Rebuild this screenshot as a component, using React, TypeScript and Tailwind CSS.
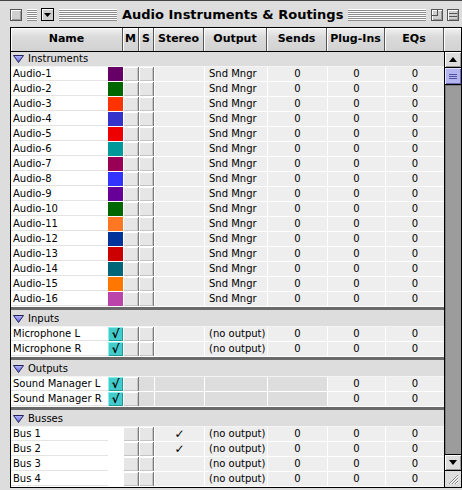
import React from "react";

type Row =
  | { kind: "group"; label: string; sep?: boolean }
  | {
      kind: "track";
      name: string;
      swatch?: string;
      check?: boolean;
      m?: boolean;
      s?: boolean;
      stereo?: boolean;
      output?: string;
      dim?: boolean;
      sends?: string;
    };

const instrumentColors = [
  "#660066",
  "#006600",
  "#ff3300",
  "#3333cc",
  "#ee0000",
  "#009999",
  "#990055",
  "#3333ff",
  "#660099",
  "#006600",
  "#ff7722",
  "#003399",
  "#cc0000",
  "#006677",
  "#ff7700",
  "#bb44aa",
];

const rows: Row[] = [
  { kind: "group", label: "Instruments" },
  ...instrumentColors.map(
    (c, i): Row => ({
      kind: "track",
      name: `Audio-${i + 1}`,
      swatch: c,
      m: true,
      s: true,
      output: "Snd Mngr",
      sends: "0",
    })
  ),
  { kind: "group", label: "Inputs", sep: true },
  { kind: "track", name: "Microphone L", check: true, m: true, s: true, output: "(no output)", sends: "0" },
  { kind: "track", name: "Microphone R", check: true, m: true, s: true, output: "(no output)", sends: "0" },
  { kind: "group", label: "Outputs", sep: true },
  { kind: "track", name: "Sound Manager L", check: true, m: true, dim: true },
  { kind: "track", name: "Sound Manager R", check: true, m: true, dim: true },
  { kind: "group", label: "Busses", sep: true },
  { kind: "track", name: "Bus 1", m: true, s: true, stereo: true, output: "(no output)", sends: "0" },
  { kind: "track", name: "Bus 2", m: true, s: true, stereo: true, output: "(no output)", sends: "0" },
  { kind: "track", name: "Bus 3", m: true, s: true, output: "(no output)", sends: "0" },
  { kind: "track", name: "Bus 4", m: true, s: true, output: "(no output)", sends: "0" },
];

function Disclosure() {
  return (
    <svg width="11" height="8" viewBox="0 0 11 8" className="shrink-0">
      <defs>
        <linearGradient id="tri" x1="0" y1="0" x2="0" y2="1">
          <stop offset="0" stopColor="#b8b8ff" />
          <stop offset="1" stopColor="#5a5ae0" />
        </linearGradient>
      </defs>
      <path d="M0.5 0.5 L10.5 0.5 L5.5 7.5 Z" fill="url(#tri)" stroke="#22225a" strokeWidth="1" />
    </svg>
  );
}

function Stripes({ className }: { className: string }) {
  return (
    <div
      className={`h-[12px] bg-[image:repeating-linear-gradient(to_bottom,#ffffff_0px,#ffffff_1px,#8c8c8c_1px,#8c8c8c_2px)] ${className}`}
    />
  );
}

function BevelBtn() {
  return (
    <div className="w-full h-full bg-[#e6e6e6] border-r border-[#7a7a7a] shadow-[inset_1px_1px_0_#ffffff,inset_-1px_-1px_0_#c4c4c4]" />
  );
}

function CheckBox() {
  return (
    <div className="w-full h-full bg-[#44cccc] flex items-center justify-center shadow-[inset_1px_1px_0_#88eeee,inset_-1px_-1px_0_#229999]">
      <span className="text-[12px] leading-none font-bold text-black" style={{ fontFamily: "'DejaVu Sans', sans-serif" }}>
        √
      </span>
    </div>
  );
}

function GroupRow({ label, sep }: { label: string; sep?: boolean }) {
  return (
    <div
      className={`flex items-center gap-[4px] pl-[2px] bg-[#dddddd] border-b border-[#f4f4f4] ${
        sep ? "h-[20px] border-t-[3px] border-t-[#6a6a6a] pt-[1px]" : "h-[15px]"
      }`}
    >
      <Disclosure />
      <span className="text-[10px] leading-none text-black">{label}</span>
    </div>
  );
}

function TrackRow({ r }: { r: Extract<Row, { kind: "track" }> }) {
  const gray = "bg-[#eeeeee] border-l border-white";
  const dark = "bg-[#dddddd] border-l border-white";
  return (
    <div className="flex h-[15px] border-b border-white text-[10px] leading-none text-black">
      <div className="w-[97px] bg-white flex items-center pl-[2px] shadow-[inset_0_-1px_0_#e4e4e4]">
        {r.name}
      </div>
      <div className="w-[15px]">
        {r.swatch ? (
          <div className="w-full h-full" style={{ backgroundColor: r.swatch }} />
        ) : r.check ? (
          <CheckBox />
        ) : (
          <div className="w-full h-full bg-white" />
        )}
      </div>
      <div className="w-[16px]">{r.m ? <BevelBtn /> : null}</div>
      <div className="w-[15px]">{r.s ? <BevelBtn /> : <div className="w-full h-full bg-[#dddddd]" />}</div>
      <div className={`w-[50px] flex items-center justify-center ${r.dim ? dark : gray}`}>
        {r.stereo ? <span className="text-[12px] leading-none">✓</span> : null}
      </div>
      <div className={`w-[63px] flex items-center pl-[4px] ${r.dim ? dark : gray}`}>{r.output ?? ""}</div>
      <div className={`w-[60px] flex items-center justify-center ${r.dim ? dark : gray}`}>{r.sends ?? ""}</div>
      <div className={`w-[58px] flex items-center justify-center ${gray}`}>0</div>
      <div className={`w-[59px] flex items-center justify-center ${gray}`}>0</div>
    </div>
  );
}

function ScrollArrow({ up }: { up?: boolean }) {
  return (
    <div className="h-[16px] w-[16px] bg-[#dddddd] shadow-[inset_1px_1px_0_#ffffff,inset_-1px_-1px_0_#999999] flex items-center justify-center border-b border-black">
      <svg width="8" height="5" viewBox="0 0 8 5">
        {up ? <path d="M0 5 L8 5 L4 0 Z" fill="#000" /> : <path d="M0 0 L8 0 L4 5 Z" fill="#000" />}
      </svg>
    </div>
  );
}

const headers: { label: string; w: string }[] = [
  { label: "Name", w: "w-[112px]" },
  { label: "M", w: "w-[16px]" },
  { label: "S", w: "w-[15px]" },
  { label: "Stereo", w: "w-[50px]" },
  { label: "Output", w: "w-[63px]" },
  { label: "Sends", w: "w-[60px]" },
  { label: "Plug-Ins", w: "w-[58px]" },
  { label: "EQs", w: "w-[59px]" },
  { label: "", w: "w-[17px]" },
];

export default function App() {
  return (
    <div
      className="w-[462px] h-[490px] bg-[#dddddd] overflow-hidden border-t border-[#444444]"
      style={{ fontFamily: "'DejaVu Sans', 'Liberation Sans', sans-serif" }}
    >
      {/* title bar */}
      <div className="h-[26px] flex items-center pt-[1px]">
        <div className="ml-[10px] w-[12px] h-[12px] border border-[#555555] bg-[#cfcfcf] shadow-[inset_1px_1px_0_#ffffff,inset_-1px_-1px_0_#9a9a9a]" />
        <Stripes className="ml-[5px] w-[10px]" />
        <div className="ml-[4px] w-[13px] h-[13px] border border-black bg-[#cccccc] flex items-center justify-center shadow-[inset_1px_1px_0_#ffffff]">
          <svg width="7" height="4" viewBox="0 0 7 4">
            <path d="M0 0 L7 0 L3.5 4 Z" fill="#000" />
          </svg>
        </div>
        <Stripes className="ml-[5px] w-[58px]" />
        <div
          className="px-[5px] text-[13px] font-bold leading-none text-black whitespace-nowrap"
          style={{ fontFamily: "'DejaVu Sans', sans-serif" }}
        >
          Audio Instruments &amp; Routings
        </div>
        <Stripes className="w-[78px]" />
        <div className="ml-[5px] w-[12px] h-[12px] border border-[#555555] bg-[#cfcfcf] shadow-[inset_1px_1px_0_#ffffff,inset_-1px_-1px_0_#9a9a9a] relative">
          <div className="absolute left-0 top-0 w-[6px] h-[6px] border-r border-b border-[#555555]" />
        </div>
        <div className="ml-[4px] w-[12px] h-[12px] border border-[#555555] bg-[#cfcfcf] shadow-[inset_1px_1px_0_#ffffff,inset_-1px_-1px_0_#9a9a9a] flex flex-col justify-center gap-[2px] px-[1px]">
          <div className="h-px bg-[#555555]" />
          <div className="h-px bg-[#555555]" />
        </div>
      </div>

      {/* table frame */}
      <div className="ml-[10px] w-[452px] h-[461px] border border-black bg-white flex flex-col">
        {/* header */}
        <div className="h-[24px] flex border-b border-black bg-[#d9d9d9]">
          {headers.map((h, i) => (
            <div
              key={i}
              className={`${h.w} h-full flex items-center justify-center text-[11px] font-bold text-black bg-[linear-gradient(#f2f2f2,#dadada_40%,#d2d2d2)] border-r border-[#555555] shadow-[inset_1px_1px_0_#ffffff] last:border-r-0`}
            >
              {h.label}
            </div>
          ))}
        </div>

        {/* body */}
        <div className="flex flex-1 min-h-0">
          <div className="w-[433px] flex flex-col bg-[#eeeeee]">
            {rows.map((r, i) =>
              r.kind === "group" ? <GroupRow key={i} label={r.label} sep={r.sep} /> : <TrackRow key={i} r={r} />
            )}
          </div>
          {/* vertical scroll bar */}
          <div className="w-[17px] border-l border-black flex flex-col bg-[#9c9c9c]">
            <ScrollArrow up />
            <div className="h-[17px] bg-[#b4b4f0] border-b border-black shadow-[inset_1px_1px_0_#e0e0ff,inset_-1px_-1px_0_#6a6ab0] flex flex-col items-center justify-center gap-[1px]">
              <div className="w-[8px] h-px bg-[#5050a0]" />
              <div className="w-[8px] h-px bg-[#5050a0]" />
              <div className="w-[8px] h-px bg-[#5050a0]" />
            </div>
            <div className="flex-1 shadow-[inset_1px_1px_0_#7a7a7a]" />
            <div className="border-t border-black">
              <ScrollArrow />
            </div>
            <div className="h-[16px] bg-[#dddddd] flex items-center justify-center">
              <svg width="12" height="12" viewBox="0 0 12 12">
                <path d="M2 11 L11 2 M5 11 L11 5 M8 11 L11 8" stroke="#888" strokeWidth="1" />
                <path d="M3 11 L11 3 M6 11 L11 6 M9 11 L11 9" stroke="#fff" strokeWidth="1" />
              </svg>
            </div>
          </div>
        </div>
      </div>
    </div>
  );
}
